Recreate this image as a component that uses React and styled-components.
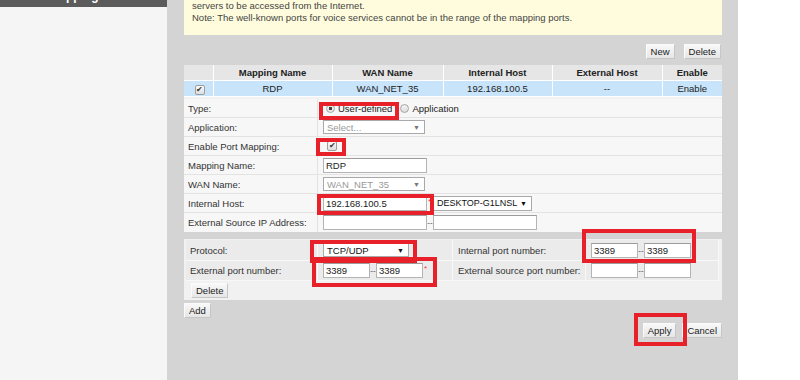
import React from 'react'
import styled, { createGlobalStyle } from 'styled-components'

const GlobalStyle = createGlobalStyle`
  html, body {
    margin: 0;
    padding: 0;
    background: #fff;
  }
  body {
    font-family: "Liberation Sans", Arial, sans-serif;
    font-size: 9.5px;
    color: #333;
  }
`

const Page = styled.div`
  position: relative;
  display: flex;
  width: 800px;
  height: 380px;
  overflow: hidden;
`

const Sidebar = styled.aside`
  width: 167px;
  flex-shrink: 0;
  background: #f5f5f5;
`

const SideHead = styled.div`
  height: 7px;
  overflow: hidden;
  background: #5b5b5b;
  color: #fff;
  font-weight: bold;
  font-size: 12px;
  padding-left: 22px;
  span {
    display: block;
    margin-top: -10px;
    line-height: 12px;
  }
`

const Main = styled.main`
  width: 571px;
  flex-shrink: 0;
  box-sizing: border-box;
  padding: 0 16px 0 17px;
  background: #d4d4d4;
`

const Note = styled.div`
  height: 35px;
  box-sizing: border-box;
  padding: 0 8px;
  background: #fefcdd;
  color: #444;
  line-height: 12px;
  p {
    margin: 0;
  }
`

const Toolbar = styled.div`
  display: flex;
  justify-content: ${(p) => p.$align || 'flex-end'};
  gap: ${(p) => p.$gap || 9}px;
  margin: ${(p) => p.$margin || '0'};
  height: 15px;
`

const Button = styled.button`
  height: 15px;
  padding: 0 4px;
  font-family: inherit;
  font-size: 9.5px;
  color: #222;
  background: linear-gradient(#f8f8f8, #e6e6e6);
  border: 1px solid;
  border-color: #fbfbfb #c6c6c6 #c6c6c6 #fbfbfb;
  line-height: 13px;
  cursor: pointer;
`

const Grid = styled.table`
  width: 538px;
  border-collapse: collapse;
  table-layout: fixed;
  th, td {
    border: 1px solid #fff;
    border-top: none;
    text-align: center;
    padding: 0;
    color: #222;
  }
  th {
    height: 15px;
    background: #e6e6e6;
    font-weight: bold;
  }
  td {
    height: 15px;
    background: #c8e4fa;
  }
  th:first-child, td:first-child {
    border-left: none;
  }
  th:last-child, td:last-child {
    border-right: none;
  }
`

const Form = styled.div`
  background: #f7f7f7;
  border-top: 2px solid #f2f2f2;
`

const FormRow = styled.div`
  display: grid;
  grid-template-columns: 134px 1fr;
  height: 19px;
  box-sizing: border-box;
  border-bottom: 1px solid #e3e3e3;
  &:last-child {
    border-bottom: none;
  }
`

const Label = styled.div`
  display: flex;
  align-items: center;
  padding-left: 4px;
  border-right: 1px solid #e3e3e3;
  color: #333;
`

const Value = styled.div`
  display: flex;
  align-items: center;
  padding-left: ${(p) => p.$pad ?? 5}px;
  color: #222;
  white-space: nowrap;
`

const TextBox = styled.input`
  width: ${(p) => p.$w}px;
  height: 15px;
  box-sizing: border-box;
  margin: 0;
  padding: 0 2px;
  border: 1px solid #b4b4b4;
  border-top-color: #9c9c9c;
  font-family: inherit;
  font-size: 9.5px;
  color: #222;
  background: #fff;
  outline: none;
`

const SelectBox = styled.div`
  display: flex;
  align-items: center;
  justify-content: space-between;
  width: ${(p) => p.$w}px;
  height: ${(p) => p.$h || 14}px;
  box-sizing: border-box;
  padding: 0 4px 0 3px;
  border: 1px solid #a9a9a9;
  background: #fff;
  white-space: nowrap;
  font-size: ${(p) => p.$size || 9.5}px;
  color: ${(p) => (p.$disabled ? '#999' : '#111')};
  &::after {
    content: '▼';
    font-size: 7px;
    color: ${(p) => (p.$disabled ? '#777' : '#111')};
  }
`

const Radio = styled.span`
  display: inline-block;
  flex-shrink: 0;
  width: 9px;
  height: 9px;
  box-sizing: border-box;
  border-radius: 50%;
  border: 1px solid #a5a5a5;
  background: ${(p) =>
    p.$on
      ? 'radial-gradient(circle, #444 0 1.5px, #e9e9e9 2px)'
      : 'linear-gradient(#f4f4f4, #dcdcdc)'};
  margin: 0 3px 0 ${(p) => p.$ml || 5}px;
`

const Check = styled.span`
  display: inline-flex;
  align-items: center;
  justify-content: center;
  width: 10px;
  height: 10px;
  box-sizing: border-box;
  margin-left: 3px;
  border: 1px solid #9d9d9d;
  border-radius: 2px;
  background: linear-gradient(#fdfdfd, #dedede);
  color: #333;
  font-size: 8px;
  line-height: 1;
`

const Dash = styled.span`
  width: 6px;
  text-align: center;
  font-size: 8px;
  color: #444;
`

const Star = styled.span`
  color: #f33;
  font-size: 8px;
  align-self: flex-start;
  margin-top: 3px;
  width: 5px;
  padding-left: 1px;
`

const PortBox = styled.div`
  margin-top: 7px;
  background: #f1f1f1;
  padding: 1px 3px 2px 2px;
`

const PortGrid = styled.div`
  display: grid;
  grid-template-columns: 132px 135px 133px 133px;
`

const PortCell = styled.div`
  display: flex;
  align-items: center;
  height: ${(p) => p.$h || 19}px;
  padding-left: ${(p) => p.$pad ?? 4}px;
  background: #ebebeb;
  border-right: 1px solid #f8f8f8;
  border-bottom: 1px solid #f8f8f8;
  color: #333;
  white-space: nowrap;
`

const DeleteRow = styled.div`
  padding: 2px 0 0 5px;
`

const RedBox = styled.div`
  position: absolute;
  left: ${(p) => p.$x}px;
  top: ${(p) => p.$y}px;
  width: ${(p) => p.$w}px;
  height: ${(p) => p.$h}px;
  box-sizing: border-box;
  border: 4px solid #e8202a;
  pointer-events: none;
`

const marks = [
  { x: 319, y: 102, w: 80, h: 18 },
  { x: 316, y: 138, w: 30, h: 18 },
  { x: 317, y: 194, w: 117, h: 21 },
  { x: 310, y: 240, w: 107, h: 23 },
  { x: 312, y: 257, w: 125, h: 30 },
  { x: 582, y: 229, w: 114, h: 34 },
  { x: 634, y: 313, w: 53, h: 33 },
]

const PortRange = ({ from = '', to = '', star }) => (
  <>
    <TextBox $w={47} defaultValue={from} />
    <Dash>--</Dash>
    <TextBox $w={47} defaultValue={to} />
    {star && <Star>*</Star>}
  </>
)

export default function App() {
  return (
    <>
      <GlobalStyle />
      <Page>
        <Sidebar>
          <SideHead>
            <span>Port Mapping</span>
          </SideHead>
        </Sidebar>

        <Main>
          <Note>
            <p>servers to be accessed from the Internet.</p>
            <p>Note: The well-known ports for voice services cannot be in the range of the mapping ports.</p>
          </Note>

          <Toolbar $margin="9px 1px 6px 0">
            <Button>New</Button>
            <Button>Delete</Button>
          </Toolbar>

          <Grid>
            <colgroup>
              <col style={{ width: 29 }} />
              <col style={{ width: 119 }} />
              <col style={{ width: 111 }} />
              <col style={{ width: 109 }} />
              <col style={{ width: 110 }} />
              <col />
            </colgroup>
            <thead>
              <tr>
                <th></th>
                <th>Mapping Name</th>
                <th>WAN Name</th>
                <th>Internal Host</th>
                <th>External Host</th>
                <th>Enable</th>
              </tr>
            </thead>
            <tbody>
              <tr>
                <td><Check>✔</Check></td>
                <td>RDP</td>
                <td>WAN_NET_35</td>
                <td>192.168.100.5</td>
                <td>--</td>
                <td>Enable</td>
              </tr>
            </tbody>
          </Grid>

          <Form>
            <FormRow>
              <Label>Type:</Label>
              <Value $pad={3}>
                <Radio $on />User-defined<Radio $ml={8} />Application
              </Value>
            </FormRow>
            <FormRow>
              <Label>Application:</Label>
              <Value><SelectBox $w={102} $disabled>Select...</SelectBox></Value>
            </FormRow>
            <FormRow>
              <Label>Enable Port Mapping:</Label>
              <Value $pad={6}><Check>✔</Check></Value>
            </FormRow>
            <FormRow>
              <Label>Mapping Name:</Label>
              <Value><TextBox $w={104} defaultValue="RDP" /></Value>
            </FormRow>
            <FormRow>
              <Label>WAN Name:</Label>
              <Value><SelectBox $w={102} $disabled>WAN_NET_35</SelectBox></Value>
            </FormRow>
            <FormRow>
              <Label>Internal Host:</Label>
              <Value>
                <TextBox $w={104} defaultValue="192.168.100.5" />
                <Star>*</Star>
                <SelectBox $w={99} $h={15} $size={9}>DESKTOP-G1LNSL</SelectBox>
              </Value>
            </FormRow>
            <FormRow>
              <Label>External Source IP Address:</Label>
              <Value>
                <TextBox $w={104} />
                <Dash>--</Dash>
                <TextBox $w={104} />
              </Value>
            </FormRow>
          </Form>

          <PortBox>
            <PortGrid>
              <PortCell $h={20}>Protocol:</PortCell>
              <PortCell $h={20} $pad={5}><SelectBox $w={86}>TCP/UDP</SelectBox></PortCell>
              <PortCell $h={20} $pad={5}>Internal port number:</PortCell>
              <PortCell $h={20} $pad={5}><PortRange from="3389" to="3389" /></PortCell>
              <PortCell>External port number:</PortCell>
              <PortCell $pad={5}><PortRange from="3389" to="3389" star /></PortCell>
              <PortCell $pad={5}>External source port number:</PortCell>
              <PortCell $pad={5}><PortRange /></PortCell>
            </PortGrid>
            <DeleteRow>
              <Button>Delete</Button>
            </DeleteRow>
          </PortBox>

          <Toolbar $align="flex-start" $margin="3px 0 0 0">
            <Button>Add</Button>
          </Toolbar>

          <Toolbar $gap={6} $margin="5px 0 0 0">
            <Button>Apply</Button>
            <Button>Cancel</Button>
          </Toolbar>
        </Main>

        {marks.map((m, i) => (
          <RedBox key={i} $x={m.x} $y={m.y} $w={m.w} $h={m.h} />
        ))}
      </Page>
    </>
  )
}
